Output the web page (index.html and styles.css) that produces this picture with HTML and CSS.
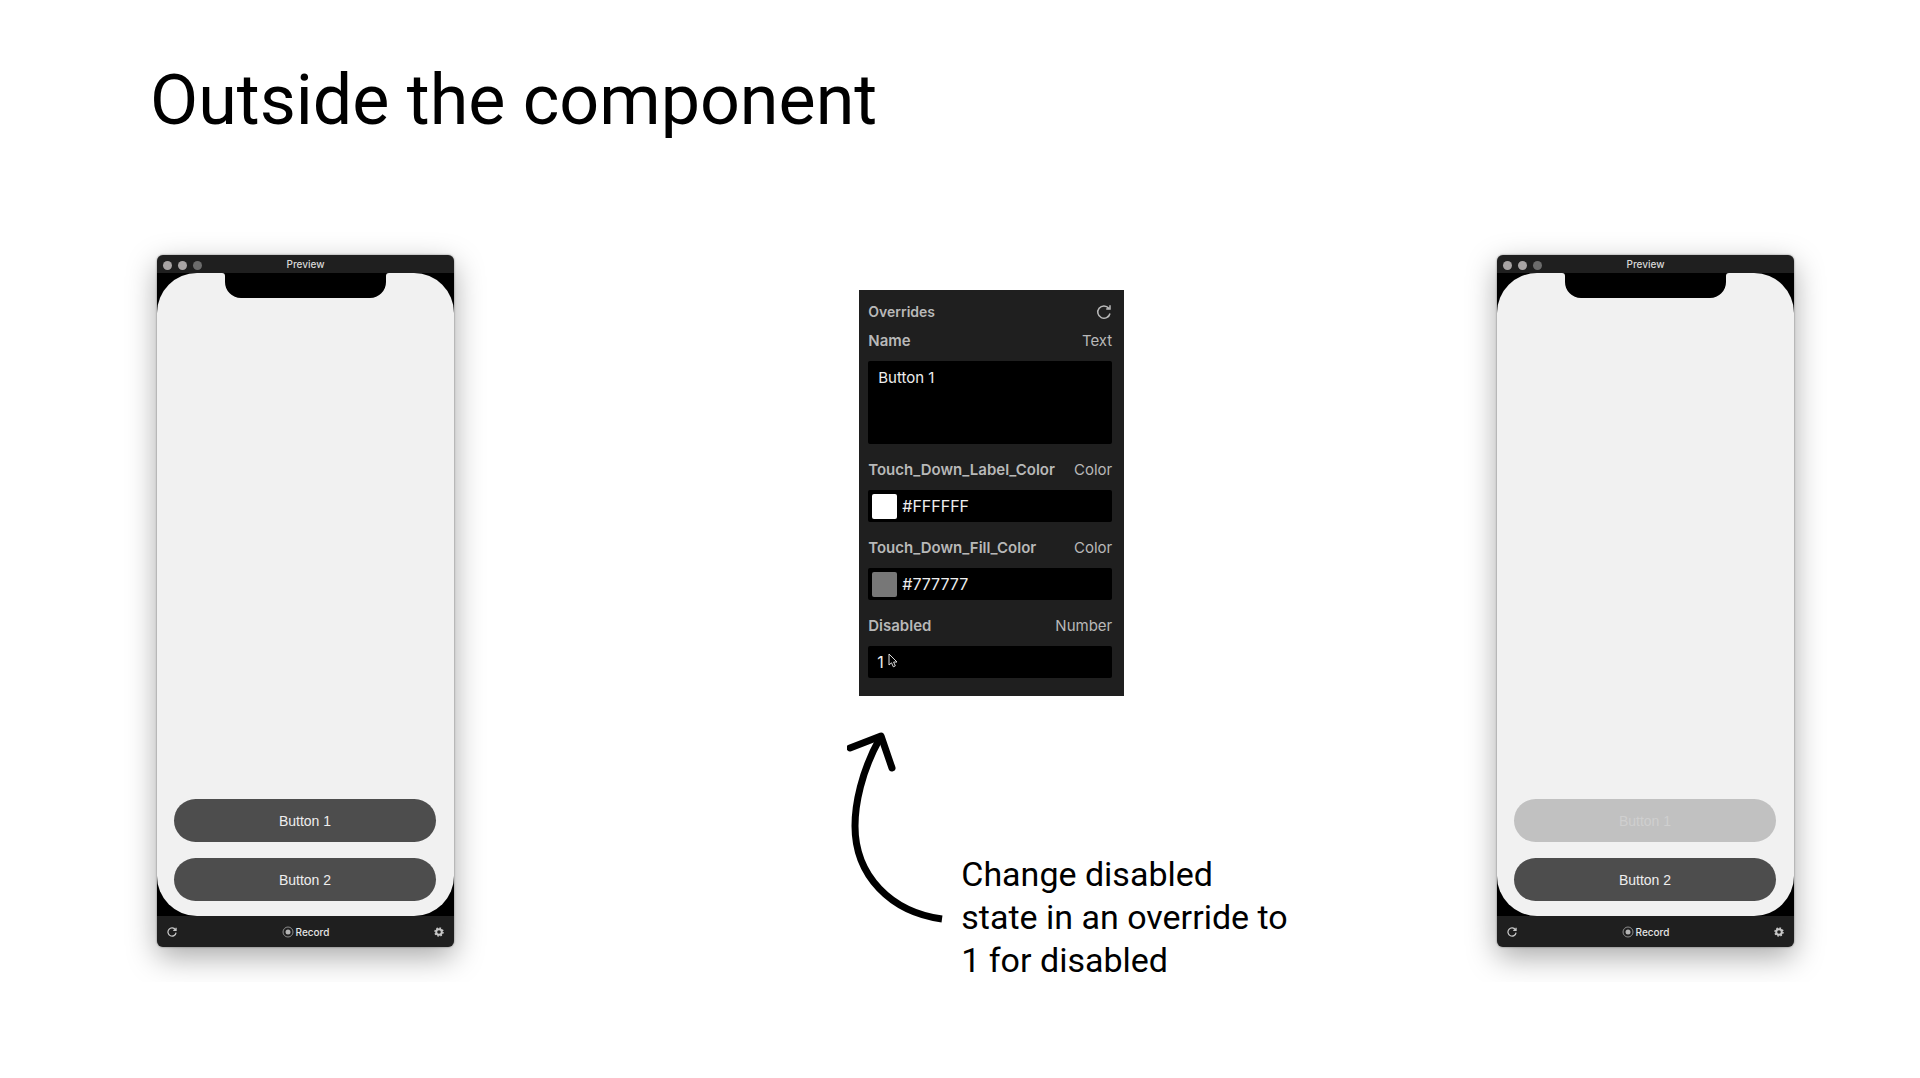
FILE: index.html
```
<!DOCTYPE html>
<html lang="en">
<head>
    <meta charset="UTF-8">
    <meta name="viewport" content="width=device-width, initial-scale=1.0">
    <title>Outside the component</title>
    <link rel="stylesheet" href="styles.css">
</head>
<body>
    <header>
        <h1>Outside the component</h1>
    </header>
    <main class="slide">
        <section class="preview preview-left">
            <div class="title-bar">
                <div class="lights">
                    <span class="light"></span>
                    <span class="light"></span>
                    <span class="light dim"></span>
                </div>
                <h2>Preview</h2>
            </div>
            <div class="device">
                <div class="screen">
                    <svg class="notch" viewBox="0 0 167 25" aria-hidden="true">
                        <path d="M0 0H167Q164 0 164 3V9A16 16 0 0 1 148 25H19A16 16 0 0 1 3 9V3Q3 0 0 0Z"/>
                    </svg>
                    <button type="button" class="pill">Button 1</button>
                    <button type="button" class="pill">Button 2</button>
                </div>
            </div>
            <div class="tool-bar">
                <button type="button" class="tool" aria-label="Reload">
                    <svg width="10" height="10" viewBox="0 0 16 16"><path d="M13.5 4.500A6.500 6.500 0 1 0 14.500 9M14.500 1V5.500H10" fill="none" stroke="currentColor" stroke-width="2"/></svg>
                </button>
                <button type="button" class="tool record">
                    <svg width="12" height="12" viewBox="0 0 12 12"><circle cx="6" cy="6" r="5" fill="none" stroke="#8c8c8c"/><circle cx="6" cy="6" r="2.500" fill="#b4b4b4"/></svg>
                    Record
                </button>
                <button type="button" class="tool" aria-label="Settings">
                    <svg width="10" height="10" viewBox="0 0 10 10"><circle cx="5" cy="5" r="2.800" fill="none" stroke="currentColor" stroke-width="2"/><circle cx="5" cy="5" r="4" fill="none" stroke="currentColor" stroke-width="1.500" stroke-dasharray="1.570 1.570"/></svg>
                </button>
            </div>
        </section>

        <section class="middle">
            <form class="overrides">
                <div class="row heading">
                    <h2>Overrides</h2>
                    <button type="button" class="reset" aria-label="Reset overrides">
                        <svg width="16" height="16" viewBox="0 0 16 16"><path d="M12.800 4.200A6.200 6.200 0 1 0 14 9.500M14 1.200V5H10.200" fill="none" stroke="currentColor" stroke-width="1.500"/></svg>
                    </button>
                </div>
                <div class="row">
                    <label for="name">Name</label>
                    <span>Text</span>
                </div>
                <textarea id="name" name="name">Button 1</textarea>
                <div class="row">
                    <label for="label_color">Touch_Down_Label_Color</label>
                    <span>Color</span>
                </div>
                <div class="field">
                    <span class="swatch white"></span>
                    <input type="text" id="label_color" name="label_color" value="#FFFFFF">
                </div>
                <div class="row">
                    <label for="fill_color">Touch_Down_Fill_Color</label>
                    <span>Color</span>
                </div>
                <div class="field">
                    <span class="swatch grey"></span>
                    <input type="text" id="fill_color" name="fill_color" value="#777777">
                </div>
                <div class="row">
                    <label for="disabled">Disabled</label>
                    <span>Number</span>
                </div>
                <div class="field">
                    <input type="text" id="disabled" name="disabled" inputmode="numeric" value="1">
                    <svg class="cursor" width="10" height="15" viewBox="0 0 10 15" aria-hidden="true"><path d="M1 1V12L3.500 9.800L5.300 13.800L7.300 12.900L5.600 9H9Z" fill="#000" stroke="#ddd"/></svg>
                </div>
            </form>
            <div class="callout">
                <svg class="arrow" width="98" height="196" viewBox="0 0 98 196" fill="none" stroke="#000" stroke-width="7" aria-hidden="true">
                    <path d="M33 8C14 42 8 75 8 96C8 146 44 182 95 189"/>
                    <path d="M3 18L34 6L45 38" stroke-linecap="round" stroke-linejoin="round"/>
                </svg>
                <p>Change disabled<br>state in an override to<br>1 for disabled</p>
            </div>
        </section>

        <section class="preview preview-right">
            <div class="title-bar">
                <div class="lights">
                    <span class="light"></span>
                    <span class="light"></span>
                    <span class="light dim"></span>
                </div>
                <h2>Preview</h2>
            </div>
            <div class="device">
                <div class="screen">
                    <svg class="notch" viewBox="0 0 167 25" aria-hidden="true">
                        <path d="M0 0H167Q164 0 164 3V9A16 16 0 0 1 148 25H19A16 16 0 0 1 3 9V3Q3 0 0 0Z"/>
                    </svg>
                    <button type="button" class="pill" disabled>Button 1</button>
                    <button type="button" class="pill">Button 2</button>
                </div>
            </div>
            <div class="tool-bar">
                <button type="button" class="tool" aria-label="Reload">
                    <svg width="10" height="10" viewBox="0 0 16 16"><path d="M13.5 4.500A6.500 6.500 0 1 0 14.500 9M14.500 1V5.500H10" fill="none" stroke="currentColor" stroke-width="2"/></svg>
                </button>
                <button type="button" class="tool record">
                    <svg width="12" height="12" viewBox="0 0 12 12"><circle cx="6" cy="6" r="5" fill="none" stroke="#8c8c8c"/><circle cx="6" cy="6" r="2.500" fill="#b4b4b4"/></svg>
                    Record
                </button>
                <button type="button" class="tool" aria-label="Settings">
                    <svg width="10" height="10" viewBox="0 0 10 10"><circle cx="5" cy="5" r="2.800" fill="none" stroke="currentColor" stroke-width="2"/><circle cx="5" cy="5" r="4" fill="none" stroke="currentColor" stroke-width="1.500" stroke-dasharray="1.570 1.570"/></svg>
                </button>
            </div>
        </section>
    </main>
</body>
</html>
```
FILE: styles.css
```
* {
    box-sizing: border-box;
}
body {
    margin: 0;
    background-color: #fff;
    color: #000;
    font-family: Inter, "Liberation Sans", sans-serif;
}
header {
    padding: 48px 150px 0;
}
h1 {
    margin: 0;
    font-family: Roboto, sans-serif;
    font-size: 70px;
    font-weight: 400;
    line-height: 104px;
}
h2 {
    margin: 0;
}
.slide {
    display: grid;
    grid-template-columns: 297px 65fr 438px 35fr 297px;
    align-items: start;
    padding: 103px 126px 0 157px;
}

/* preview windows */
.preview {
    display: flex;
    flex-direction: column;
    height: 692px;
    border-radius: 6px;
    background-color: #1f1f1f;
    overflow: hidden;
    box-shadow: 0 10px 30px rgba(0, 0, 0, 0.34), 0 0 2px rgba(0, 0, 0, 0.5);
}
.preview-left {
    grid-column: 1;
}
.preview-right {
    grid-column: 5;
}
.title-bar {
    display: grid;
    grid-template-columns: 1fr auto 1fr;
    height: 18px;
    padding: 0 6px;
}
.title-bar h2 {
    color: #d8d8d8;
    font-size: 10px;
    font-weight: 500;
    line-height: 18px;
}
.lights {
    display: flex;
    gap: 6px;
    padding-top: 6px;
}
.light {
    width: 9px;
    height: 9px;
    border-radius: 50%;
    background-color: #a8a4a4;
}
.light.dim {
    background-color: #6c6c6c;
}
.device {
    display: flex;
    flex: 1;
    background-color: #000;
}
.screen {
    display: flex;
    flex: 1;
    flex-direction: column;
    gap: 16px;
    padding: 0 18px 15px 17px;
    border-radius: 40px;
    background-color: #f1f1f1;
}
.notch {
    width: 167px;
    height: 25px;
    margin: 0 auto auto;
}
.pill {
    height: 43px;
    border: none;
    border-radius: 22px;
    background-color: #4d4d4d;
    color: #eee;
    font-family: "Liberation Sans", Arial, sans-serif;
    font-size: 14px;
    cursor: pointer;
}
.pill:disabled {
    background-color: #c1c1c1;
    color: #cfcfcf;
    cursor: default;
}
.tool-bar {
    display: flex;
    justify-content: space-between;
    align-items: center;
    height: 31px;
    padding: 0 10px;
}
.tool {
    display: flex;
    align-items: center;
    gap: 2px;
    padding: 0;
    border: none;
    background: none;
    color: #c8c8c8;
    font-family: inherit;
    font-size: 10px;
    font-weight: 500;
    cursor: pointer;
}
.record {
    color: #e4e4e4;
}

/* overrides panel */
.middle {
    grid-column: 3;
    padding-top: 35px;
}
.overrides {
    width: 265px;
    margin-left: 12px;
    padding: 6px 12px 18px 9px;
    background-color: #1f1f1f;
    color: #b8b8b8;
    font-size: 15px;
}
.row {
    display: flex;
    justify-content: space-between;
    align-items: center;
    height: 46px;
    padding-top: 4px;
}
.row.heading {
    height: 30px;
    padding-top: 0;
}
.row.heading + .row {
    height: 35px;
    padding: 0 0 6px;
}
.row label {
    font-weight: 600;
}
.overrides h2 {
    font-size: 14px;
    font-weight: 600;
}
.reset {
    display: flex;
    padding: 2px 0 0;
    border: none;
    background: none;
    color: inherit;
    cursor: pointer;
}
textarea, .field {
    border: none;
    border-radius: 2px;
    background-color: #000;
}
textarea, .field input {
    color: #eee;
    font-family: inherit;
    outline: none;
}
textarea {
    display: block;
    width: 100%;
    height: 83px;
    padding: 7px 10px;
    font-size: 15px;
    line-height: 20px;
    resize: none;
}
.field {
    display: flex;
    align-items: center;
    position: relative;
    height: 32px;
    padding: 0 4px;
}
.field input {
    flex: 1;
    min-width: 0;
    padding: 0 5px;
    border: none;
    background: none;
    font-size: 16px;
}
.swatch {
    width: 25px;
    height: 25px;
    border-radius: 2px;
}
.swatch.white {
    background-color: #fff;
}
.swatch.grey {
    background-color: #777;
}
.cursor {
    position: absolute;
    top: 7px;
    left: 20px;
}

/* arrow and note */
.callout {
    display: flex;
    gap: 16px;
    padding-top: 34px;
}
.arrow {
    flex: none;
}
.callout p {
    margin: 123px 0 0;
    font-family: Roboto, sans-serif;
    font-size: 34px;
    font-weight: 400;
    line-height: 43px;
    white-space: nowrap;
}
```
